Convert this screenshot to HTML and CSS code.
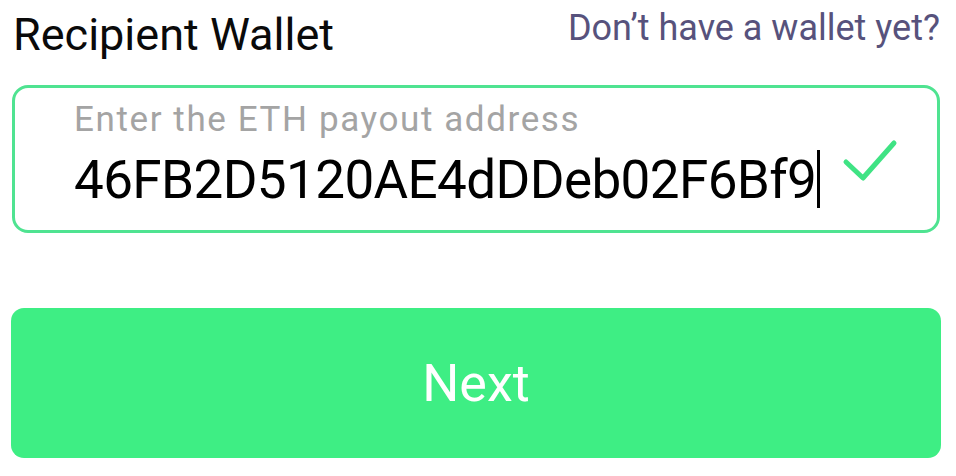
FILE: index.html
```html
<!DOCTYPE html>
<html lang="en">
<head>
<meta charset="utf-8">
<title>Recipient Wallet</title>
<link rel="stylesheet" href="styles.css">
</head>
<body>
<main class="page">
  <header class="head">
    <h1 class="title">Recipient Wallet</h1>
    <a class="help" href="#">Don’t have a wallet yet?</a>
  </header>
  <div class="field">
    <div class="field-text">
      <div class="label">Enter the ETH payout address</div>
      <div class="value">46FB2D5120AE4dDDeb02F6Bf9<span class="caret"></span></div>
    </div>
    <svg class="check" width="60" height="48" viewBox="0 0 60 48" aria-hidden="true">
      <polyline points="6,26 23,42 54,7" fill="none" stroke="#3fe384" stroke-width="5" stroke-linecap="round" stroke-linejoin="round"/>
    </svg>
  </div>
  <button class="next" type="button">Next</button>
</main>
</body>
</html>
```
FILE: styles.css
```css
html, body {
  margin: 0;
  padding: 0;
  background: #ffffff;
}
body {
  width: 956px;
  height: 476px;
  overflow: hidden;
  font-family: Roboto, "Liberation Sans", sans-serif;
}
.page {
  padding: 0 16px 0 12px;
}
.head {
  display: flex;
  justify-content: space-between;
  align-items: flex-start;
}
.title {
  margin: 9px 0 0 1px;
  font-size: 45px;
  line-height: 52px;
  font-weight: 400;
  color: #0a0a0a;
}
.help {
  margin-top: 6px;
  font-size: 36px;
  line-height: 44px;
  color: #57527c;
  text-decoration: none;
}
.field {
  margin-top: 24px;
  height: 142px;
  border: 3px solid #4fe391;
  border-radius: 16px;
  display: flex;
  align-items: flex-start;
}
.field-text {
  flex: 1;
  padding: 12px 0 0 59px;
}
.label {
  font-size: 35px;
  line-height: 40px;
  letter-spacing: 1.6px;
  color: #a4a4a4;
}
.value {
  margin-top: 10px;
  font-size: 53px;
  line-height: 60px;
  letter-spacing: -0.6px;
  color: #000000;
  white-space: nowrap;
}
.caret {
  display: inline-block;
  width: 3px;
  height: 58px;
  background: #000000;
  vertical-align: -10px;
  margin-left: 1px;
}
.check {
  margin: 48px 37px 0 0;
  flex: none;
}
.next {
  display: block;
  margin: 75px -1px 0 -1px;
  width: calc(100% + 2px);
  height: 150px;
  padding: 1px 0 0 0;
  border: none;
  border-radius: 13px;
  background: #3eee84;
  color: #ffffff;
  font-family: Roboto, "Liberation Sans", sans-serif;
  font-size: 52px;
  line-height: 149px;
}
```
